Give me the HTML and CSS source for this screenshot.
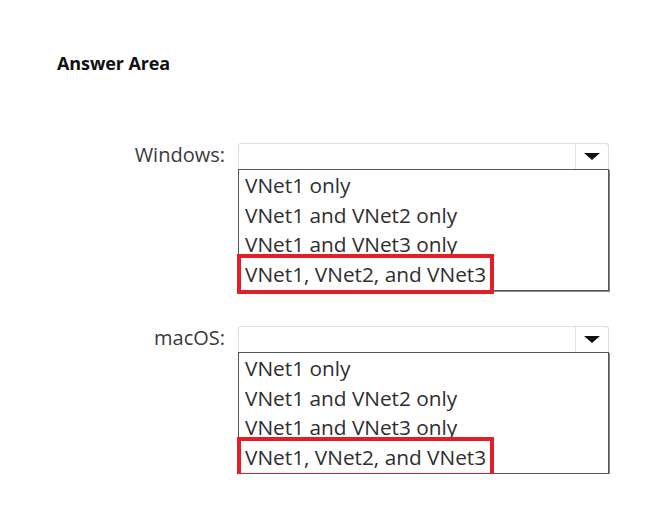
FILE: index.html
```html
<!DOCTYPE html>
<html>
<head>
<meta charset="utf-8">
<link rel="stylesheet" href="styles.css">
</head>
<body>
<div class="page">
  <h2 class="title">Answer Area</h2>
  <div class="rows">
    <div class="row">
      <div class="label">Windows:</div>
      <div class="control">
        <div class="select"><div class="value"></div><div class="arrow"><svg width="16" height="7" viewBox="0 0 16 7"><path d="M0 0 H16 L8 7 Z" fill="#111"/></svg></div></div>
        <div class="list">
          <div class="item">VNet1 only</div>
          <div class="item">VNet1 and VNet2 only</div>
          <div class="item">VNet1 and VNet3 only</div>
          <div class="item picked">VNet1, VNet2, and VNet3</div>
        </div>
      </div>
    </div>
    <div class="row">
      <div class="label">macOS:</div>
      <div class="control">
        <div class="select"><div class="value"></div><div class="arrow"><svg width="16" height="7" viewBox="0 0 16 7"><path d="M0 0 H16 L8 7 Z" fill="#111"/></svg></div></div>
        <div class="list">
          <div class="item">VNet1 only</div>
          <div class="item">VNet1 and VNet2 only</div>
          <div class="item">VNet1 and VNet3 only</div>
          <div class="item picked">VNet1, VNet2, and VNet3</div>
        </div>
      </div>
    </div>
  </div>
</div>
</body>
</html>
```
FILE: styles.css
```css
html, body {
  margin: 0;
  background: #ffffff;
}
body {
  font-family: "Open Sans", "Noto Sans", "Liberation Sans", sans-serif;
  color: #333;
}
.page {
  padding: 52px 0 0 57px;
}
.title {
  margin: 0;
  font-size: 18px;
  line-height: 22px;
  font-weight: 700;
  color: #111;
  letter-spacing: -0.1px;
}
.rows {
  display: flex;
  flex-direction: column;
  gap: 35px;
  margin-top: 69px;
}
.row {
  display: flex;
  align-items: flex-start;
}
.label {
  width: 168px;
  text-align: right;
  padding-right: 13px;
  font-size: 20px;
  line-height: 24px;
  padding-top: 0;
  color: #3a3a3a;
}
.control {
  width: 371px;
  display: flex;
  flex-direction: column;
}
.select {
  height: 25px;
  display: flex;
  border: 1px solid #dcdce8;
  border-bottom: none;
  border-radius: 3px 3px 0 0;
}
.value {
  flex: 1;
}
.arrow {
  width: 32px;
  border-left: 1px solid #e2e2ec;
  display: flex;
  align-items: center;
  justify-content: center;
  padding-bottom: 1px;
}
.list {
  height: 119px;
  border: 1px solid #555;
  box-shadow: 1px 1px 0 #888;
  padding-top: 1px;
}
.item {
  height: 29.5px;
  line-height: 29.5px;
  padding-left: 6px;
  font-size: 20.8px;
  color: #2e2e2e;
  letter-spacing: 0;
  white-space: nowrap;
}
.picked {
  position: relative;
}
.picked::after {
  content: "";
  position: absolute;
  left: -2px;
  top: -6px;
  width: 249px;
  height: 32px;
  border: 4px solid #e41e26;
}
```
